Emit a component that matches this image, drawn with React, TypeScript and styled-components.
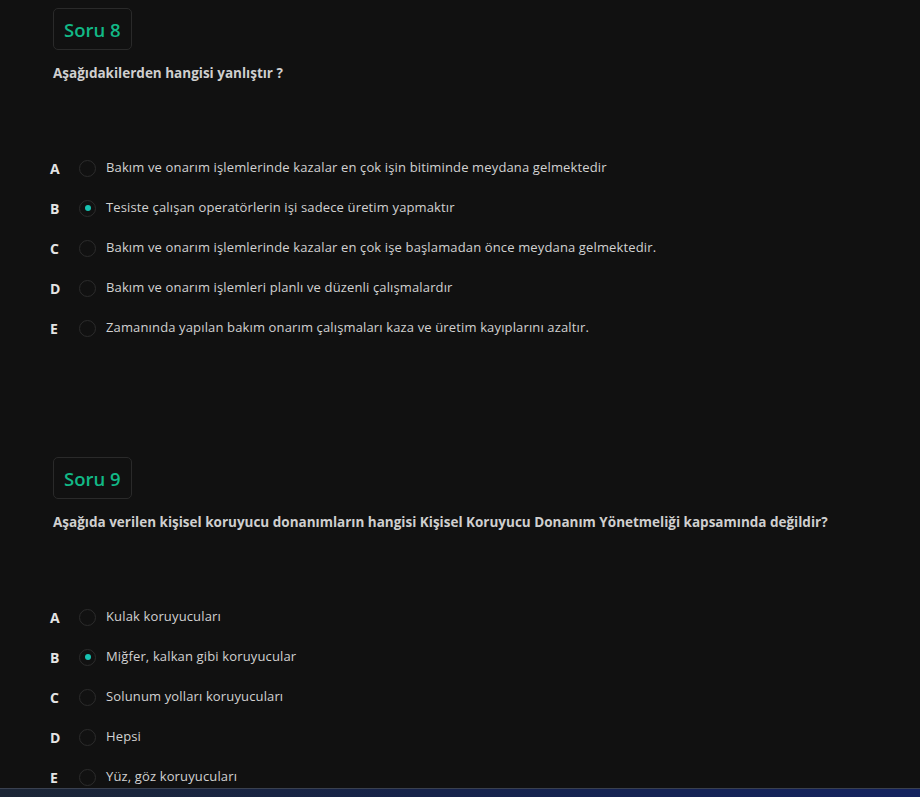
import React from "react";
import styled, { createGlobalStyle } from "styled-components";

const Global = createGlobalStyle`
  html, body { margin: 0; padding: 0; background: #111111; }
  body { font-family: "Open Sans", "Noto Sans", sans-serif; overflow: hidden; }
`;

const Page = styled.div`
  padding: 8px 0 0 50px;
  height: 797px;
  overflow: hidden;
  box-sizing: border-box;
`;

const Section = styled.section`
  display: flex;
  flex-direction: column;
  align-items: flex-start;
  margin-bottom: 109px;
`;

const Badge = styled.div`
  margin-left: 3px;
  height: 42px;
  box-sizing: border-box;
  padding: 0 10px 0 10px;
  min-width: 78px;
  display: flex;
  align-items: center;
  border: 1px solid #2a2a2a;
  border-radius: 5px;
  color: #12b886;
  font-size: 18.5px;
  font-weight: 600;
`;

const Question = styled.div`
  margin: 14px 0 0 3px;
  height: 18px;
  line-height: 18px;
  color: #cfcfcf;
  font-size: 13.5px;
  font-weight: 700;
`;

const Options = styled.div`
  margin-top: 66px;
  display: flex;
  flex-direction: column;
`;

const Row = styled.label`
  height: 40px;
  display: flex;
  align-items: center;
`;

const Letter = styled.span`
  width: 29px;
  color: #e4e4e4;
  font-size: 14px;
  font-weight: 700;
  margin-top: 1px;
`;

const Radio = styled.span<{ $checked?: boolean }>`
  width: 17px;
  height: 17px;
  box-sizing: border-box;
  border: 1px solid #2c2c2c;
  border-radius: 50%;
  display: flex;
  align-items: center;
  justify-content: center;
  margin-right: 10px;
  &::after {
    content: "";
    width: 6px;
    height: 6px;
    border-radius: 50%;
    background: #17c3b2;
    display: ${(p) => (p.$checked ? "block" : "none")};
  }
`;

const OptText = styled.span`
  color: #d2d2d2;
  font-size: 13px;
  letter-spacing: 0.14px;
  font-weight: 500;
  margin-top: -2px;
`;

const BottomBar = styled.div`
  position: fixed;
  left: 0;
  right: 0;
  bottom: 0;
  height: 8px;
  border-top: 1px solid #3a4150;
  background: linear-gradient(90deg, #1c2636 0%, #16234a 45%, #14235f 100%);
`;

type Q = { n: number; q: string; opts: string[]; sel: number };

const data: Q[] = [
  {
    n: 8,
    q: "Aşağıdakilerden hangisi yanlıştır ?",
    sel: 1,
    opts: [
      "Bakım ve onarım işlemlerinde kazalar en çok işin bitiminde meydana gelmektedir",
      "Tesiste çalışan operatörlerin işi sadece üretim yapmaktır",
      "Bakım ve onarım işlemlerinde kazalar en çok işe başlamadan önce meydana gelmektedir.",
      "Bakım ve onarım işlemleri planlı ve düzenli çalışmalardır",
      "Zamanında yapılan bakım onarım çalışmaları kaza ve üretim kayıplarını azaltır.",
    ],
  },
  {
    n: 9,
    q: "Aşağıda verilen kişisel koruyucu donanımların hangisi Kişisel Koruyucu Donanım Yönetmeliği kapsamında değildir?",
    sel: 1,
    opts: [
      "Kulak koruyucuları",
      "Miğfer, kalkan gibi koruyucular",
      "Solunum yolları koruyucuları",
      "Hepsi",
      "Yüz, göz koruyucuları",
    ],
  },
];

const letters = ["A", "B", "C", "D", "E"];

export default function App() {
  return (
    <>
      <Global />
      <Page>
        {data.map((d) => (
          <Section key={d.n}>
            <Badge>Soru {d.n}</Badge>
            <Question>{d.q}</Question>
            <Options>
              {d.opts.map((o, i) => (
                <Row key={i}>
                  <Letter>{letters[i]}</Letter>
                  <Radio $checked={i === d.sel} />
                  <OptText>{o}</OptText>
                </Row>
              ))}
            </Options>
          </Section>
        ))}
      </Page>
      <BottomBar />
    </>
  );
}
